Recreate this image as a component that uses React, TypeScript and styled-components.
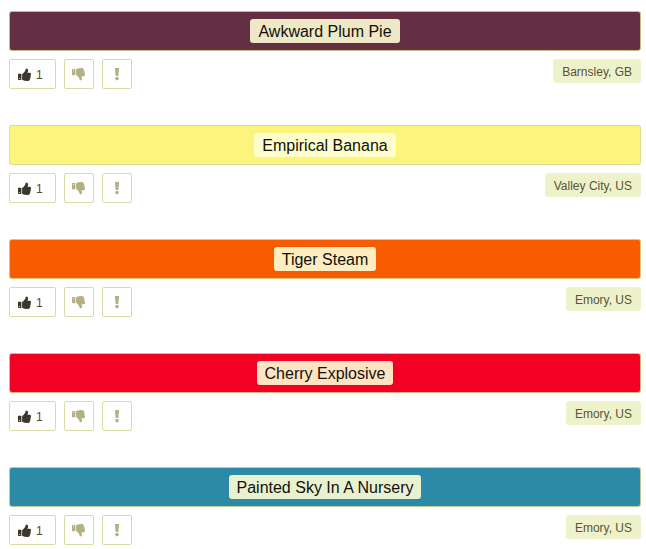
import React from "react";
import styled, { createGlobalStyle } from "styled-components";

const GlobalStyle = createGlobalStyle`
  *, *::before, *::after { box-sizing: border-box; }
  body {
    margin: 0;
    background: #ffffff;
    font-family: "Liberation Sans", Arial, Helvetica, sans-serif;
  }
`;

const List = styled.ul`
  list-style: none;
  margin: 0;
  padding: 11px 5px 0 9px;
  display: flex;
  flex-direction: column;
  gap: 36px;
`;

const Item = styled.li`
  display: flex;
  flex-direction: column;
  gap: 8px;
`;

const Swatch = styled.div<{ $color: string }>`
  display: flex;
  justify-content: center;
  align-items: center;
  height: 40px;
  border: 1px solid rgba(213, 214, 150, 0.85);
  border-radius: 3px;
  background: ${({ $color }) => $color};
`;

const Name = styled.h2`
  margin: 0;
  padding: 2px 8px 0;
  border-radius: 3px;
  background: rgba(255, 255, 215, 0.89);
  color: #11110a;
  font-size: 16px;
  font-weight: 400;
  line-height: 22px;
`;

const Footer = styled.div`
  display: flex;
  justify-content: space-between;
  align-items: flex-start;
`;

const Actions = styled.div`
  display: flex;
  gap: 8px;
`;

const ActionButton = styled.button<{ $active?: boolean }>`
  display: flex;
  align-items: center;
  justify-content: center;
  gap: 5px;
  min-width: 30px;
  height: 30px;
  padding: 0 ${({ $active }) => ($active ? "12px 0 8px" : "0")};
  border: 1px solid #d9dba6;
  border-radius: 2px;
  background: #ffffff;
  color: ${({ $active }) => ($active ? "#3b382b" : "#b5b083")};
  font-family: inherit;
  font-size: 12px;
  line-height: 16px;
  cursor: pointer;
`;

const Count = styled.span`
  padding-top: 2px;
  color: #4f4a2e;
`;

const Place = styled.span`
  padding: 2px 9px 0;
  border-radius: 3px;
  background: #eef2cb;
  color: #5a5335;
  font-size: 12px;
  line-height: 22px;
`;

const Icon = styled.svg`
  display: block;
  fill: currentColor;
`;

const thumb =
  "M256 1344q0-26-19-45t-45-19-45 19-19 45 19 45 45 19 45-19 19-45zm160-512v640q0 26-19 45t-45 19h-288q-26 0-45-19t-19-45v-640q0-26 19-45t45-19h288q26 0 45 19t19 45zm1184 0q0 86-55 149 15 44 15 76 3 76-43 137 17 56 0 117-15 57-54 94 9 112-49 181-64 76-197 78h-129q-66 0-145-15.5t-120.5-29-96.5-31.5q-123-44-158-46-26-1-44.5-18.5t-18.5-42.5v-641q0-25 18-43.5t43-20.5q24-2 76-59t101-121q68-87 101-120 18-18 31-48t17.5-48.5 13.5-60.5q7-39 12.5-61t19.5-52 34-50q19-19 45-19 46 0 82.5 10.5t60 26 40 40.5 24 45 12 50 5 45 .5 39q0 38-9.5 76t-19 60-27.5 56q-3 6-10 18t-11 22-8 24h277q78 0 135 57t57 135z";

const ThumbUp = () => (
  <Icon width="13" height="13" viewBox="0 64 1600 1600" aria-hidden="true">
    <path fillRule="evenodd" d={thumb} />
  </Icon>
);

const ThumbDown = () => (
  <Icon width="13" height="13" viewBox="0 64 1600 1600" aria-hidden="true">
    <path fillRule="evenodd" transform="translate(0 1728) scale(1 -1)" d={thumb} />
  </Icon>
);

const Exclamation = () => (
  <Icon width="6" height="14" viewBox="0 0 6 14" aria-hidden="true">
    <path d="M1.4 1h3.2q.5 0 .5.5l-.7 7q0 .4-.4.4H2q-.4 0-.4-.4l-.7-7q0-.5.5-.5z" />
    <circle cx="3" cy="11.600" r="1.800" />
  </Icon>
);

const colors = [
  { name: "Awkward Plum Pie", color: "#642f43", place: "Barnsley, GB", likes: 1 },
  { name: "Empirical Banana", color: "#fcf47c", place: "Valley City, US", likes: 1 },
  { name: "Tiger Steam", color: "#f75c00", place: "Emory, US", likes: 1 },
  { name: "Cherry Explosive", color: "#f30025", place: "Emory, US", likes: 1 },
  { name: "Painted Sky In A Nursery", color: "#2d8aa7", place: "Emory, US", likes: 1 },
];

export default function App() {
  return (
    <>
      <GlobalStyle />
      <List>
        {colors.map(({ name, color, place, likes }) => (
          <Item key={name}>
            <Swatch $color={color}>
              <Name>{name}</Name>
            </Swatch>
            <Footer>
              <Actions>
                <ActionButton $active aria-label={`Like ${name}, ${likes}`}>
                  <ThumbUp />
                  <Count>{likes}</Count>
                </ActionButton>
                <ActionButton aria-label={`Dislike ${name}`}>
                  <ThumbDown />
                </ActionButton>
                <ActionButton aria-label={`Report ${name}`}>
                  <Exclamation />
                </ActionButton>
              </Actions>
              <Place>{place}</Place>
            </Footer>
          </Item>
        ))}
      </List>
    </>
  );
}
